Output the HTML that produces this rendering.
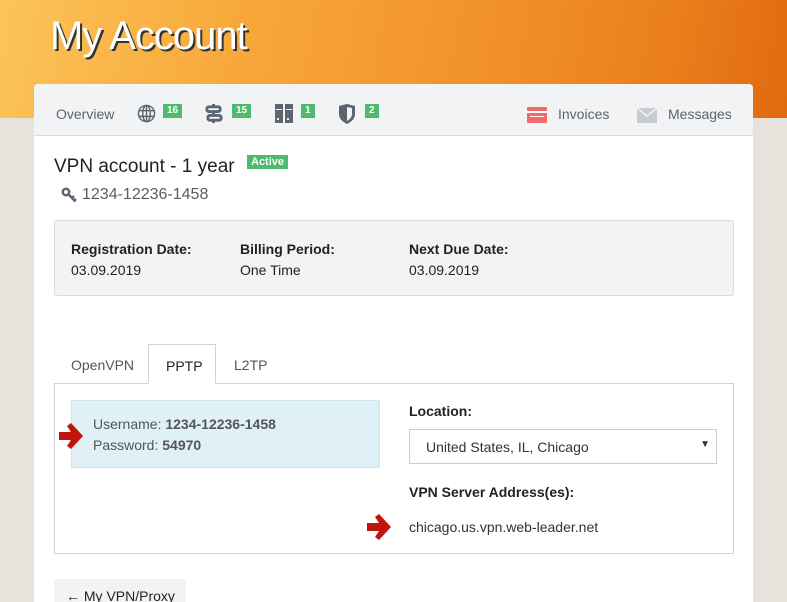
<!DOCTYPE html>
<html><head><meta charset="utf-8"><style>
*{box-sizing:border-box;margin:0;padding:0}
html,body{width:787px;height:602px;overflow:hidden}
body{font-family:"Liberation Sans",sans-serif;background:#e7e3dc;position:relative;color:#222}
.hero{position:absolute;left:0;top:0;width:787px;height:118px;background:linear-gradient(100deg,#fbc45a 0%,#f8a83a 30%,#f2922a 60%,#ea7d1c 85%,#e06a10 100%)}
.hero h1{position:absolute;left:50px;top:14px;font-weight:normal;font-size:40px;color:#fff;text-shadow:2px 2px 0 #333;letter-spacing:-1px}
.card{position:absolute;left:34px;top:84px;width:719px;height:518px;background:#fff;border-radius:4px 4px 0 0;overflow:hidden}
.nav{height:52px;background:#f1f3f5;border-bottom:1px solid #d6dce0;border-radius:4px 4px 0 0;position:relative;font-size:14px;color:#5a6570}
.nav span{position:absolute;top:22px}
.b{position:absolute;top:20px;background:#4cbb6c;color:#fff;font-size:10px;font-weight:bold;padding:0 4px;height:14px;line-height:14px}
.t{position:absolute;left:20px;top:72px;font-size:19px;color:#222}
.act{position:absolute;left:213px;top:71px;background:#4cbb6c;color:#fff;font-size:11px;font-weight:bold;padding:1px 4px}
.key{position:absolute;left:48px;top:102px;font-size:16px;color:#555d66}
.info{position:absolute;left:20px;top:136px;width:680px;height:76px;background:#f1f3f5;border:1px solid #d8dde1;border-radius:3px;font-size:14px}
.info div{position:absolute;top:18px;line-height:21px}
.tabs{position:absolute;left:20px;top:260px;width:680px;font-size:14px;color:#555}
.tab{position:absolute;top:0;height:40px;padding:13px 17px 0}
.pane{position:absolute;left:20px;top:299px;width:680px;height:171px;border:1px solid #ccd3d8}
.cred{position:absolute;left:16px;top:16px;width:309px;height:68px;background:#dff0f7;border:1px solid #cfe6ef;font-size:14px;color:#555;padding:13px 0 0 21px;line-height:21px}
.lbl{font-weight:bold;font-size:14px;color:#222;position:absolute}
.sel{position:absolute;left:354px;top:45px;width:308px;height:35px;border:1px solid #c8ced2;font-size:14px;color:#333;padding:9px 16px}
.btn{position:absolute;left:20px;top:495px;width:132px;height:40px;background:#f1f3f5;font-size:14px;padding:9px 0 0 12px;color:#222}
</style></head><body>
<div class="hero"><h1>My Account</h1></div>
<div class="card">
 <div class="nav">
  <span style="left:22px">Overview</span>
  <svg style="position:absolute;left:103px;top:20px" width="19" height="19" viewBox="0 0 20 20" fill="none" stroke="#5a6570" stroke-width="1.5"><circle cx="10" cy="10" r="8.5"/><ellipse cx="10" cy="10" rx="4" ry="8.5"/><path d="M2 7h16M2 13h16M10 1.5v17"/></svg>
  <div class="b" style="left:129px">16</div>
  <svg style="position:absolute;left:171px;top:20px" width="19" height="19" viewBox="0 0 20 20" fill="none" stroke="#5a6570" stroke-width="3"><rect x="2" y="3" width="14" height="5" rx="2"/><rect x="3" y="12" width="14" height="5" rx="2"/><path d="M9 0v3M9 8v4M9 17v3"/></svg>
  <div class="b" style="left:198px">15</div>
  <svg style="position:absolute;left:240px;top:20px" width="20" height="19" viewBox="0 0 20 19" fill="#5a6570"><rect x="1" y="0" width="8" height="19"/><rect x="11" y="0" width="8" height="19"/><rect x="2" y="5" width="6" height="1" fill="#f1f3f5"/><rect x="12" y="5" width="6" height="1" fill="#f1f3f5"/><rect x="3" y="14" width="2" height="2" fill="#f1f3f5"/><rect x="13" y="14" width="2" height="2" fill="#f1f3f5"/></svg>
  <div class="b" style="left:267px">1</div>
  <svg style="position:absolute;left:304px;top:20px" width="18" height="20" viewBox="0 0 18 20"><path d="M1 2l8-2 8 2v8c0 5-4 8-8 10C5 18 1 15 1 10z" fill="#5a6570"/><path d="M9 3v14c3-2 5-4 5-7V4z" fill="#f1f3f5"/></svg>
  <div class="b" style="left:331px">2</div>
  <svg style="position:absolute;left:493px;top:23px" width="20" height="16"><rect width="20" height="16" rx="1" fill="#f06c6c"/><rect x="0" y="4" width="20" height="2" fill="#fff"/><rect x="3" y="9" width="14" height="1" fill="#fff"/></svg>
  <span style="left:524px">Invoices</span>
  <svg style="position:absolute;left:603px;top:24px" width="20" height="15"><rect width="20" height="15" fill="#c8ccd0"/><path d="M0 0l10 8 10-8" stroke="#f1f3f5" fill="none" stroke-width="1.5"/></svg>
  <span style="left:634px">Messages</span>
 </div>
 <div class="t">VPN account - 1 year</div><div class="act">Active</div>
 <svg style="position:absolute;left:27px;top:103px" width="18" height="16" viewBox="0 0 18 16" fill="none" stroke="#5a6570" stroke-width="2.5"><circle cx="5" cy="5" r="3.2"/><path d="M7.5 7.5l7 7M11 11l2-2M13.5 13.5l1.5-1.5"/></svg>
 <div class="key">1234-12236-1458</div>
 <div class="info">
  <div style="left:16px"><b>Registration Date:</b><br>03.09.2019</div>
  <div style="left:185px"><b>Billing Period:</b><br>One Time</div>
  <div style="left:354px"><b>Next Due Date:</b><br>03.09.2019</div>
 </div>
 <div class="tabs">
  <div class="tab" style="left:0">OpenVPN</div>
  <div class="tab" style="left:94px;width:68px;border:1px solid #ccd3d8;border-bottom:1px solid #fff;background:#fff;z-index:2;height:40px;color:#222">PPTP</div>
  <div class="tab" style="left:163px">L2TP</div>
 </div>
 <div class="pane">
  <div class="cred">Username: <b>1234-12236-1458</b><br>Password: <b>54970</b></div>
  <div class="lbl" style="left:354px;top:19px">Location:</div>
  <div class="sel">United States, IL, Chicago<span style="position:absolute;right:6px;top:9px;font-size:10px">▼</span></div>
  <div class="lbl" style="left:354px;top:100px">VPN Server Address(es):</div>
  <div style="position:absolute;left:354px;top:135px;font-size:14px;color:#333">chicago.us.vpn.web-leader.net</div>
 </div>
 <svg style="position:absolute;left:23px;top:338px" width="28" height="28" viewBox="0 0 28 28"><path d="M2 10h12l-4-6 4-3 12 13-12 13-4-3 4-6H2z" fill="#c0150c"/></svg>
 <svg style="position:absolute;left:331px;top:429px" width="28" height="28" viewBox="0 0 28 28"><path d="M2 10h12l-4-6 4-3 12 13-12 13-4-3 4-6H2z" fill="#c0150c"/></svg>
 <div class="btn"><b>&#x2190;</b> My VPN/Proxy</div>
</div>
</body></html>
